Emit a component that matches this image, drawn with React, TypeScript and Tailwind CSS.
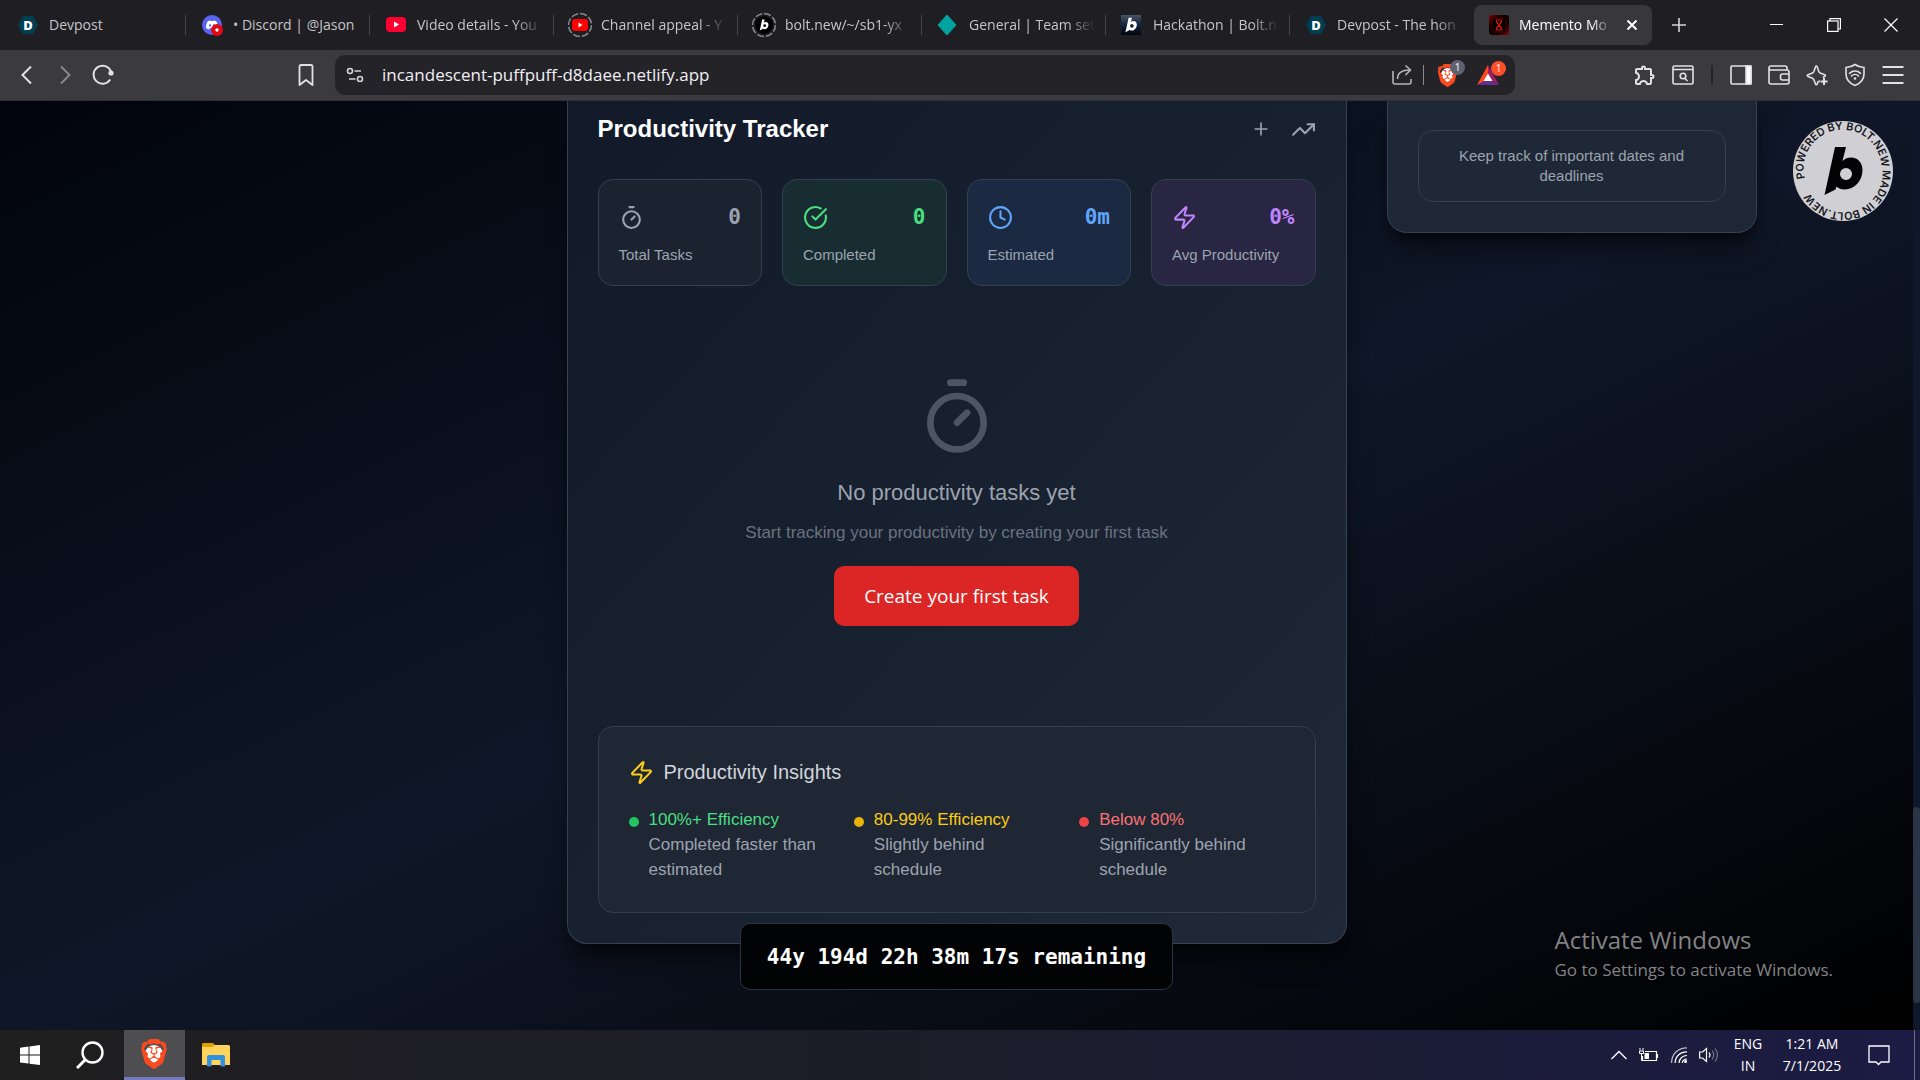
import type { ReactNode } from "react";
import { CircleCheckBig, Clock, Plus, Timer, TrendingUp, Zap } from "lucide-react";
import { MdOutlineExtension } from "react-icons/md";
import { SiBrave, SiDiscord } from "react-icons/si";

const UI_FONT = "font-['Open_Sans','Noto_Sans',sans-serif]";
const PAGE_FONT = "font-['Liberation_Sans',Arial,sans-serif]";
const MONO_FONT = "font-['DejaVu_Sans_Mono',monospace]";

const BOLT_PATH =
    "M42 26H53L49.5 40C52 37.5 55 36.5 58 36.5C65 36.5 69.5 42 69.5 49C69.5 60 61 68.5 52 68.5C47.5 68.5 44.8 67 43.5 65.5L42.5 68.5L31.5 74ZM53 47a6 6 0 1 0 0 12a6 6 0 1 0 0-12Z";

function DevpostIcon() {
    return (
        <svg viewBox="0 0 26 26" className="size-[26px]">
            <path d="M8 4h10l5 9-5 9H8l-5-9z" fill="#003e54" />
            <text x="13" y="18" textAnchor="middle" fontSize="13" fontWeight="800" fill="#fff" className="font-['Open_Sans',sans-serif]">
                D
            </text>
        </svg>
    );
}

function DiscordIcon() {
    return (
        <span className="relative flex size-[26px] items-center justify-center">
            <span className="flex size-5 items-center justify-center rounded-full bg-[#5865f2]">
                <SiDiscord className="size-3 text-white" />
            </span>
            <svg viewBox="0 0 14 14" className="absolute right-0.5 bottom-0.5 size-3">
                <circle cx="7" cy="7" r="7" fill="#e00914" />
                <circle cx="7" cy="7" r="2" fill="#fff" />
            </svg>
        </span>
    );
}

function YoutubeIcon() {
    return (
        <svg viewBox="0 0 26 26" className="size-[26px]">
            <rect x="3" y="5" width="20" height="15" rx="4" fill="#ff0033" />
            <path d="M11 9.500v6l5-3z" fill="#fff" />
        </svg>
    );
}

function DashedYoutubeIcon() {
    return (
        <svg viewBox="0 0 26 26" className="size-[26px]">
            <circle cx="13" cy="13" r="11.5" fill="none" stroke="#8a898e" strokeWidth="1.5" strokeDasharray="7 2" />
            <rect x="5" y="7" width="16" height="12" rx="3" fill="#ff0000" />
            <path d="M11.5 10.5v5l4-2.5z" fill="#fff" />
        </svg>
    );
}

function DashedBoltIcon() {
    return (
        <svg viewBox="0 0 26 26" className="size-[26px]">
            <circle cx="13" cy="13" r="11.5" fill="none" stroke="#8a898e" strokeWidth="1.5" strokeDasharray="7 2" />
            <circle cx="13" cy="13" r="9" fill="#000" />
            <path d={BOLT_PATH} fill="#fff" fillRule="evenodd" transform="translate(1.5 1.5) scale(0.23)" />
        </svg>
    );
}

function TeamIcon() {
    return (
        <svg viewBox="0 0 26 26" className="size-[26px]">
            <path d="M12 3l9 10-9 10-9-10z" fill="#00a3a0" stroke="#00a3a0" strokeLinejoin="round" />
        </svg>
    );
}

function HackathonIcon() {
    return (
        <svg viewBox="0 0 26 26" className="size-[26px]">
            <defs>
                <linearGradient id="hack" x1="0" y1="0" x2="0" y2="1">
                    <stop offset="0" stopColor="#4a5363" />
                    <stop offset="0.5" stopColor="#10233f" />
                    <stop offset="1" stopColor="#02050c" />
                </linearGradient>
            </defs>
            <rect x="2" y="3" width="20" height="20" fill="url(#hack)" />
            <path d={BOLT_PATH} fill="#fff" fillRule="evenodd" transform="translate(-3 -2) scale(0.3)" />
        </svg>
    );
}

function MementoIcon() {
    return (
        <svg viewBox="0 0 26 26" className="size-[26px]">
            <defs>
                <linearGradient id="memento" x1="0" y1="0" x2="1" y2="1">
                    <stop offset="0" stopColor="#8c0000" />
                    <stop offset="0.3" stopColor="#120000" />
                    <stop offset="0.7" stopColor="#120000" />
                    <stop offset="1" stopColor="#8c0000" />
                </linearGradient>
            </defs>
            <rect x="3" y="3" width="20" height="20" rx="3" fill="url(#memento)" />
            <rect x="6" y="6" width="14" height="14" rx="3" fill="#000" stroke="#5a0000" strokeWidth="0.8" />
            <path d="M9.5 8h7M9.5 18h7M10.5 8v2l2.5 3 2.5-3V8M10.5 18v-2l2.5-3 2.5 3v2" fill="none" stroke="#e01010" strokeWidth="1.2" />
        </svg>
    );
}

const tabs: { title: string; icon: ReactNode }[] = [
    { title: "Devpost", icon: <DevpostIcon /> },
    { title: "• Discord | @Jason", icon: <DiscordIcon /> },
    { title: "Video details - You", icon: <YoutubeIcon /> },
    { title: "Channel appeal - Y", icon: <DashedYoutubeIcon /> },
    { title: "bolt.new/~/sb1-yx", icon: <DashedBoltIcon /> },
    { title: "General | Team set", icon: <TeamIcon /> },
    { title: "Hackathon | Bolt.n", icon: <HackathonIcon /> },
    { title: "Devpost - The hon", icon: <DevpostIcon /> },
];

function TabTitle({ children, fade }: { children: ReactNode; fade: boolean }) {
    return (
        <span
            className={`min-w-0 flex-1 text-left whitespace-nowrap ${
                fade ? "[mask-image:linear-gradient(to_right,black_78%,transparent)]" : ""
            }`}
        >
            {children}
        </span>
    );
}

function TabStrip() {
    return (
        <div className="flex h-[50px] shrink-0 items-center bg-[#1f1e23] pl-0.5 text-sm text-[#c6c5ca]">
            {tabs.map((tab, i) => (
                <div key={tab.title} className="flex w-[184px] items-center">
                    <button type="button" className="flex h-10 min-w-0 flex-1 items-center gap-2 pr-2.5 pl-[13px]">
                        {tab.icon}
                        <TabTitle fade={i > 1}>{tab.title}</TabTitle>
                    </button>
                    <span className={i === tabs.length - 1 ? "w-px" : "h-5 w-px bg-[#434248]"} />
                </div>
            ))}
            <div className="flex h-10 w-[178px] items-center rounded-lg bg-[#38373c] pr-3 pl-3 text-white">
                <button type="button" className="flex min-w-0 flex-1 items-center gap-[7px]">
                    <MementoIcon />
                    <TabTitle fade>Memento Mo</TabTitle>
                </button>
                <button type="button" aria-label="Close tab" className="ml-3 p-0.5">
                    <svg viewBox="0 0 12 12" className="size-3" fill="none" stroke="#fff" strokeWidth="2">
                        <path d="M1.5 1.5l9 9M10.5 1.5l-9 9" />
                    </svg>
                </button>
            </div>
            <button type="button" aria-label="New tab" className="ml-5 text-[#d4d3d8]">
                <svg viewBox="0 0 14 14" className="size-3.5" fill="none" stroke="currentColor" strokeWidth="1.6">
                    <path d="M7 0v14M0 7h14" />
                </svg>
            </button>
            <div className="ml-auto flex pr-px">
                <button type="button" aria-label="Minimize" className="flex w-[57px] justify-center">
                    <svg viewBox="0 0 14 14" className="size-3.5" stroke="#fff">
                        <path d="M0 6.5h13" />
                    </svg>
                </button>
                <button type="button" aria-label="Restore" className="flex w-[57px] justify-center">
                    <svg viewBox="0 0 14 14" className="size-3.5" fill="none" stroke="#fff" strokeWidth="1.2">
                        <rect x="0.6" y="3" width="10.4" height="10.4" />
                        <path d="M3 3V0.6h10.4V11H11" />
                    </svg>
                </button>
                <button type="button" aria-label="Close" className="flex w-[57px] justify-center">
                    <svg viewBox="0 0 14 14" className="size-3.5" fill="none" stroke="#fff" strokeWidth="1.2">
                        <path d="M0.5 0.5l13 13M13.5 0.5l-13 13" />
                    </svg>
                </button>
            </div>
        </div>
    );
}

function ToolButton({ label, children }: { label: string; children: ReactNode }) {
    return (
        <button type="button" aria-label={label} className="flex size-[38px] items-center justify-center text-[#e2e1e6]">
            {children}
        </button>
    );
}

function BraveLogo({ className }: { className: string }) {
    return (
        <span className={`relative flex items-center justify-center ${className}`}>
            <span className="absolute inset-[20%] rounded-full bg-white" />
            <SiBrave className="relative size-full text-[#fb4a20]" />
        </span>
    );
}

function Toolbar() {
    return (
        <div className="flex h-[51px] shrink-0 items-center border-b border-[#2f2e33] bg-[#3b3a3f] pr-2 pl-2">
            <ToolButton label="Back">
                <svg viewBox="0 0 20 20" className="size-5" fill="none" stroke="currentColor" strokeWidth="2">
                    <path d="M14 1.5L5.5 10l8.5 8.5" />
                </svg>
            </ToolButton>
            <ToolButton label="Forward">
                <svg viewBox="0 0 20 20" className="size-5" fill="none" stroke="#88878c" strokeWidth="2">
                    <path d="M6 1.5l8.5 8.5L6 18.5" />
                </svg>
            </ToolButton>
            <ToolButton label="Reload">
                <svg viewBox="0 0 22 22" className="size-[22px]" fill="none" stroke="currentColor" strokeWidth="2">
                    <path d="M18.2 15.5A9 9 0 1 1 19 7.5" />
                    <circle cx="19" cy="9" r="2.6" fill="currentColor" stroke="none" />
                </svg>
            </ToolButton>
            <div className="ml-[165px]">
                <ToolButton label="Bookmark">
                    <svg viewBox="0 0 22 22" className="size-[22px]" fill="none" stroke="currentColor" strokeWidth="1.8" strokeLinejoin="round">
                        <path d="M4.500 2.5A1.5 1.5 0 0 1 6 1h10A1.5 1.5 0 0 1 17.500 2.5V21l-6.500-5-6.500 5z" />
                    </svg>
                </ToolButton>
            </div>
            <div className="ml-2.5 flex h-10 flex-1 items-center rounded-[10px] bg-[#242328] pr-0.5 pl-[11px]">
                <svg viewBox="0 0 18 18" className="size-[18px]" fill="none" stroke="#d4d3d8" strokeWidth="1.6">
                    <circle cx="4" cy="5" r="2.5" />
                    <path d="M8.5 5H15M3 13h6.5" />
                    <circle cx="14" cy="13" r="2.5" />
                </svg>
                <input
                    type="text"
                    aria-label="Address"
                    defaultValue="incandescent-puffpuff-d8daee.netlify.app"
                    className="ml-[18px] min-w-0 flex-1 bg-transparent text-[17px] text-[#f0eff4] outline-none"
                />
                <button type="button" aria-label="Share" className="text-[#b5b4b9]">
                    <svg viewBox="0 0 22 22" className="size-[22px]" fill="none" stroke="currentColor" strokeWidth="1.6">
                        <path d="M2 7v11a2 2 0 0 0 2 2h14a2 2 0 0 0 2-2v-3" />
                        <path d="M6.5 15c0-6 4-9 12.5-9M14.5 1.5L19.5 6l-5 5" />
                    </svg>
                </button>
                <span className="ml-2.5 h-5 w-px bg-[#8a898e]" />
                <button type="button" aria-label="Brave Shields" className="relative ml-3">
                    <BraveLogo className="size-[23px]" />
                    <span className="absolute -top-1 left-3.5 flex size-[15px] items-center justify-center rounded-full bg-[#5f6070] text-[10px] text-white">
                        1
                    </span>
                </button>
                <button type="button" aria-label="Brave Rewards" className="relative mr-3.5 ml-[18px]">
                    <svg viewBox="0 0 22 20" className="h-5 w-[22px]">
                        <path d="M11 0L0 20l7.5-4L11 9z" fill="#ff4724" />
                        <path d="M11 0l11 20-7.5-4L11 9z" fill="#9e1f63" />
                        <path d="M0 20h22l-7.5-4h-7z" fill="#662d91" />
                        <path d="M11 8.5l4.5 7.5h-9z" fill="#fff" />
                    </svg>
                    <span className="absolute -top-1 left-3.5 flex size-[15px] items-center justify-center rounded-full bg-[#ff4f2a] text-[10px] text-white">
                        1
                    </span>
                </button>
            </div>
            <div className="ml-[111px] flex items-center">
                <ToolButton label="Extensions">
                    <MdOutlineExtension className="size-6" />
                </ToolButton>
                <ToolButton label="Search tabs">
                    <svg viewBox="0 0 22 20" className="h-5 w-[22px]" fill="none" stroke="currentColor" strokeWidth="1.6">
                        <rect x="1" y="1" width="20" height="18" rx="1.5" />
                        <path d="M1 4.5h20M12.5 13l3 3" />
                        <circle cx="11" cy="11" r="2.8" />
                    </svg>
                </ToolButton>
                <span className="mx-[9px] h-5 w-0.5 rounded bg-[#242328]" />
                <ToolButton label="Sidebar">
                    <svg viewBox="0 0 22 20" className="h-5 w-[22px]" fill="none" stroke="currentColor" strokeWidth="1.6">
                        <rect x="1" y="1" width="20" height="18" rx="1" />
                        <path d="M16 1h5v18h-5z" fill="#fff" />
                    </svg>
                </ToolButton>
                <ToolButton label="Wallet">
                    <svg viewBox="0 0 22 20" className="h-5 w-[22px]" fill="none" stroke="currentColor" strokeWidth="1.6">
                        <path d="M1 3v14a2 2 0 0 0 2 2h16a2 2 0 0 0 2-2V7a2 2 0 0 0-2-2H3a2 2 0 0 1 0-4h14a2 2 0 0 1 2 2v2" />
                        <path d="M21 9h-6.5a2 2 0 0 0-2 2v2a2 2 0 0 0 2 2H21" />
                    </svg>
                </ToolButton>
                <ToolButton label="Leo AI">
                    <svg viewBox="0 0 22 22" className="size-[22px]" fill="none" stroke="currentColor" strokeWidth="1.6" strokeLinejoin="round">
                        <path d="M14 17.5c-1-.3-1.7-.2-2 .5l-.8 2c-.3 1-1.4 1-1.7 0l-1.5-4c-.4-1-1-1.6-2-2l-4-1.5c-1-.3-1-1.5 0-1.8L6 9.2c1-.4 1.6-1 2-2l1.5-4.5c.3-1 1.4-1 1.7 0l1.5 4.5c.4 1 1 1.6 2 2l4 1.5c1 .3 1 1.4 0 1.8l-2 .8" />
                        <path d="M18 14v7M14.5 17.5h7" strokeWidth="2" />
                    </svg>
                </ToolButton>
                <ToolButton label="VPN">
                    <svg viewBox="0 0 22 24" className="h-6 w-[22px]" fill="none" stroke="currentColor" strokeWidth="1.6" strokeLinecap="round">
                        <path d="M11 1.5c2.5 1.8 5.5 2.8 9 3V11c0 5.5-4 9.5-9 11.5C6 20.5 2 16.5 2 11V4.5c3.5-.2 6.5-1.2 9-3z" />
                        <path d="M5.5 10.3c3.3-3 7.7-3 11 0M7.5 13c2-2 5-2 7 0" />
                        <circle cx="11" cy="15.5" r="1.3" fill="currentColor" stroke="none" />
                    </svg>
                </ToolButton>
                <ToolButton label="Menu">
                    <svg viewBox="0 0 22 20" className="h-5 w-[22px]" stroke="currentColor" strokeWidth="1.8">
                        <path d="M0.5 2h21M0.5 10h21M0.5 18h21" />
                    </svg>
                </ToolButton>
            </div>
        </div>
    );
}

const stats = [
    { label: "Total Tasks", value: "0", icon: Timer, color: "text-[#9ca3af]", card: "bg-[#1b2331]" },
    { label: "Completed", value: "0", icon: CircleCheckBig, color: "text-[#4ade80]", card: "bg-[#182d31]" },
    { label: "Estimated", value: "0m", icon: Clock, color: "text-[#60a5fa]", card: "bg-[#1b2943]" },
    { label: "Avg Productivity", value: "0%", icon: Zap, color: "text-[#c084fc]", card: "bg-[#282642]" },
];

const insights = [
    { title: "100%+ Efficiency", text: "Completed faster than estimated", dot: "bg-[#22c55e]", color: "text-[#4ade80]" },
    { title: "80-99% Efficiency", text: "Slightly behind schedule", dot: "bg-[#eab308]", color: "text-[#facc15]" },
    { title: "Below 80%", text: "Significantly behind schedule", dot: "bg-[#ef4444]", color: "text-[#f87171]" },
];

function ProductivityTracker() {
    return (
        <section className="col-span-2 rounded-b-[20px] border border-t-0 border-[#374151] bg-linear-to-br from-[#121a2a] via-[#18212f] to-[#202938] px-[30px] pt-2.5 pb-[30px] shadow-xl shadow-black/50">
            <div className="flex items-center justify-between">
                <h2 className="text-2xl leading-[36px] font-bold text-white">Productivity Tracker</h2>
                <div className="flex items-center gap-5 text-[#9ca3af]">
                    <button type="button" aria-label="Add task">
                        <Plus size={20} />
                    </button>
                    <button type="button" aria-label="Show trends">
                        <TrendingUp size={25} />
                    </button>
                </div>
            </div>

            <div className="mt-8 grid grid-cols-4 gap-5">
                {stats.map(({ label, value, icon: Icon, color, card }) => (
                    <div key={label} className={`rounded-[15px] border border-[#353f4d] p-5 ${card}`}>
                        <div className={`flex h-[35px] items-center justify-between ${color}`}>
                            <Icon size={25} />
                            <span className={`text-[21px] leading-[35px] font-bold ${MONO_FONT}`}>{value}</span>
                        </div>
                        <p className="mt-2.5 text-[15px] leading-5 text-[#9ca3af]">{label}</p>
                    </div>
                ))}
            </div>

            <div className="flex flex-col items-center pt-[90px] pb-[100px] text-center">
                <Timer size={80} className="text-[#4b5563]" />
                <h3 className="mt-5 text-[22px] leading-[34px] text-[#9ca3af]">No productivity tasks yet</h3>
                <p className="mt-2.5 text-[17px] leading-[25px] text-[#6b7280]">
                    Start tracking your productivity by creating your first task
                </p>
                <button type="button" className={`mt-[21px] rounded-[10px] bg-[#dc2626] px-[30px] py-[15px] text-[19px] leading-[30px] text-white ${UI_FONT}`}>
                    Create your first task
                </button>
            </div>

            <div className="rounded-[15px] border border-[#343e4c] bg-[#1f2735] p-[30px]">
                <h3 className="flex items-center gap-2.5 text-xl leading-[30px] text-[#d1d5db]">
                    <Zap size={25} className="text-[#facc15]" />
                    Productivity Insights
                </h3>
                <div className="mt-5 grid grid-cols-3 gap-5 text-[17px] leading-[25px]">
                    {insights.map((item) => (
                        <div key={item.title} className="flex gap-2.5 pr-3">
                            <span className={`mt-2.5 size-2.5 shrink-0 rounded-full ${item.dot}`} />
                            <div>
                                <p className={item.color}>{item.title}</p>
                                <p className="text-[#9ca3af]">{item.text}</p>
                            </div>
                        </div>
                    ))}
                </div>
            </div>
        </section>
    );
}

function BoltBadge() {
    return (
        <a href="#bolt" aria-label="Made in Bolt.new" className="absolute top-5 right-5">
            <svg viewBox="0 0 100 100" className="size-[100px]">
                <defs>
                    <path id="ring" d="M11.8 57.5A39 39 0 1 1 88.2 42.5A39 39 0 1 1 11.8 57.5" />
                </defs>
                <circle cx="50" cy="50" r="50" fill="#d0d0d4" />
                <text fontSize="10.8" fontWeight="600" fill="#15151a" className="font-['Inter',sans-serif]">
                    <textPath href="#ring">POWERED BY BOLT.NEW MADE IN BOLT.NEW</textPath>
                </text>
                <path d={BOLT_PATH} fill="#030305" fillRule="evenodd" />
            </svg>
        </a>
    );
}

function Page() {
    return (
        <div className="flex min-h-0 flex-1">
            <main className={`relative min-w-0 flex-1 overflow-hidden bg-linear-to-br/srgb from-[#01040c] via-[#0f1728] to-black ${PAGE_FONT}`}>
                <div className="mx-auto grid max-w-[1600px] grid-cols-4 items-start gap-10">
                    <div />
                    <ProductivityTracker />
                    <aside className="rounded-b-[20px] border border-t-0 border-[#374151] bg-[#1e2735] px-[30px] pt-[29px] pb-[30px] shadow-xl shadow-black/50">
                        <p className="rounded-[15px] border border-[#353f4d] bg-[#1f2836] p-[15px] text-center text-[15px] leading-5 text-[#9ca3af]">
                            Keep track of important dates and deadlines
                        </p>
                    </aside>
                </div>

                <BoltBadge />

                <div className="absolute inset-x-0 bottom-10 flex justify-center">
                    <div className={`rounded-[10px] border border-[#2b3442] bg-[#020304] px-[26px] pt-[18px] pb-4 text-[21px] leading-[31px] font-bold whitespace-pre text-white ${MONO_FONT}`}>
                        44y 194d 22h 38m 17s remaining
                    </div>
                </div>

                <div className={`absolute right-20 bottom-[47px] text-[#828385] ${UI_FONT}`}>
                    <p className="text-2xl leading-[34px]">Activate Windows</p>
                    <p className="text-[17px] leading-[26px]">Go to Settings to activate Windows.</p>
                </div>
            </main>
            <div className="flex w-[7px] shrink-0 flex-col justify-end bg-[#0f172a] pb-[27px]">
                <div className="h-[196px] rounded-full bg-[#2b3445]" />
            </div>
        </div>
    );
}

function Taskbar() {
    return (
        <footer className="flex h-[50px] shrink-0 items-center bg-linear-to-r from-[#1f1f1f] via-[#1c1c2a] to-[#1b1b44] text-[15px] text-white">
            <button type="button" aria-label="Start" className="flex w-[60px] justify-center">
                <svg viewBox="0 0 20 20" className="size-5" fill="#fff">
                    <path d="M0 2.8l8.5-1.2v8H0zM9.5 1.4L20 0v9.6H9.5zM0 10.6h8.5v8L0 17.4zM9.5 10.6H20V20L9.5 18.7z" />
                </svg>
            </button>
            <button type="button" aria-label="Search" className="flex w-[60px] justify-center">
                <svg viewBox="0 0 28 28" className="size-7" fill="none" stroke="#fff" strokeWidth="2.4">
                    <circle cx="16.5" cy="11.5" r="10" />
                    <path d="M9.5 18.5L1 27" strokeWidth="3" />
                </svg>
            </button>
            <button type="button" aria-label="Brave" className="ml-1 flex h-full w-[61px] items-center justify-center border-b-[3px] border-[#767abf] bg-[#4e4e51] pr-0.5">
                <BraveLogo className="size-[30px]" />
            </button>
            <button type="button" aria-label="File Explorer" className="flex w-[61px] justify-center">
                <svg viewBox="0 0 28 24" className="h-6 w-7">
                    <path d="M0 1.5Q0 0 1.5 0H11l3 3h-3v4H0z" fill="#e0a000" />
                    <path d="M0 4h10l3-2h13.5Q28 2 28 3.5V22H0z" fill="#ffd35c" />
                    <path d="M5 23.5V14q0-2 2-2h14q2 0 2 2v9.5h-4.5V17h-9v6.5z" fill="#3290e0" />
                </svg>
            </button>

            <div className="ml-auto flex h-full items-center">
                <button type="button" aria-label="Show hidden icons">
                    <svg viewBox="0 0 16 10" className="h-2.5 w-4" fill="none" stroke="#fff" strokeWidth="1.4">
                        <path d="M0.5 9L8 1.5 15.5 9" />
                    </svg>
                </button>
                <svg viewBox="0 0 20 14" className="ml-3 h-3.5 w-5" fill="none" stroke="#fff">
                    <path d="M6 3.5h11.5v9H3.5V8M18.5 6v4" strokeWidth="1.2" />
                    <path d="M5.5 5H10v6H5.5z" fill="#fff" stroke="none" />
                    <path d="M1 0v2.5M4 0v2.5M0.5 3h4v2.5h-4zM2.5 5.5V12.5h2" />
                </svg>
                <svg viewBox="0 0 16 16" className="ml-3 size-4" fill="none" stroke="#fff" strokeWidth="1.2">
                    <path d="M0.6 16C0.6 7 7 0.8 16 0.8" opacity="0.7" />
                    <path d="M4.2 16C4.2 9.5 9 4.8 16 4.8M8 16c0-4 3.5-7.5 8-7.5" />
                    <path d="M11.3 16c0-2.2 2-4 4.7-4" />
                    <circle cx="14.6" cy="14.5" r="1.5" fill="#fff" stroke="none" />
                </svg>
                <svg viewBox="0 0 21 16" className="ml-3 h-4 w-[21px]" fill="none" stroke="#fff" strokeWidth="1.2">
                    <path d="M0.6 5h2.9l4-3.5v13l-4-3.5H0.6zM10 5.5q2 2.5 0 5" />
                    <path d="M13 3.5q3.5 4.5 0 9M16 1.5q5 6.5 0 13" opacity="0.4" />
                </svg>
                <div className="ml-3 w-8 text-center text-sm leading-[22px]">
                    <p>ENG</p>
                    <p>IN</p>
                </div>
                <div className="ml-4 w-16 text-center text-sm leading-[22px]">
                    <p className="whitespace-nowrap">1:21 AM</p>
                    <p>7/1/2025</p>
                </div>
                <button type="button" aria-label="Notifications" className="ml-6">
                    <svg viewBox="0 0 22 22" className="size-[22px]" fill="none" stroke="#fff" strokeWidth="1.3">
                        <path d="M1 2h20v16h-8l-2.5 2.5L8 18H1z" />
                    </svg>
                </button>
                <span className="mr-[5px] ml-6 h-full w-px bg-[#6c6c80]" />
            </div>
        </footer>
    );
}

export default function App() {
    return (
        <div className={`flex h-screen flex-col overflow-hidden ${UI_FONT}`}>
            <TabStrip />
            <Toolbar />
            <Page />
            <Taskbar />
        </div>
    );
}
